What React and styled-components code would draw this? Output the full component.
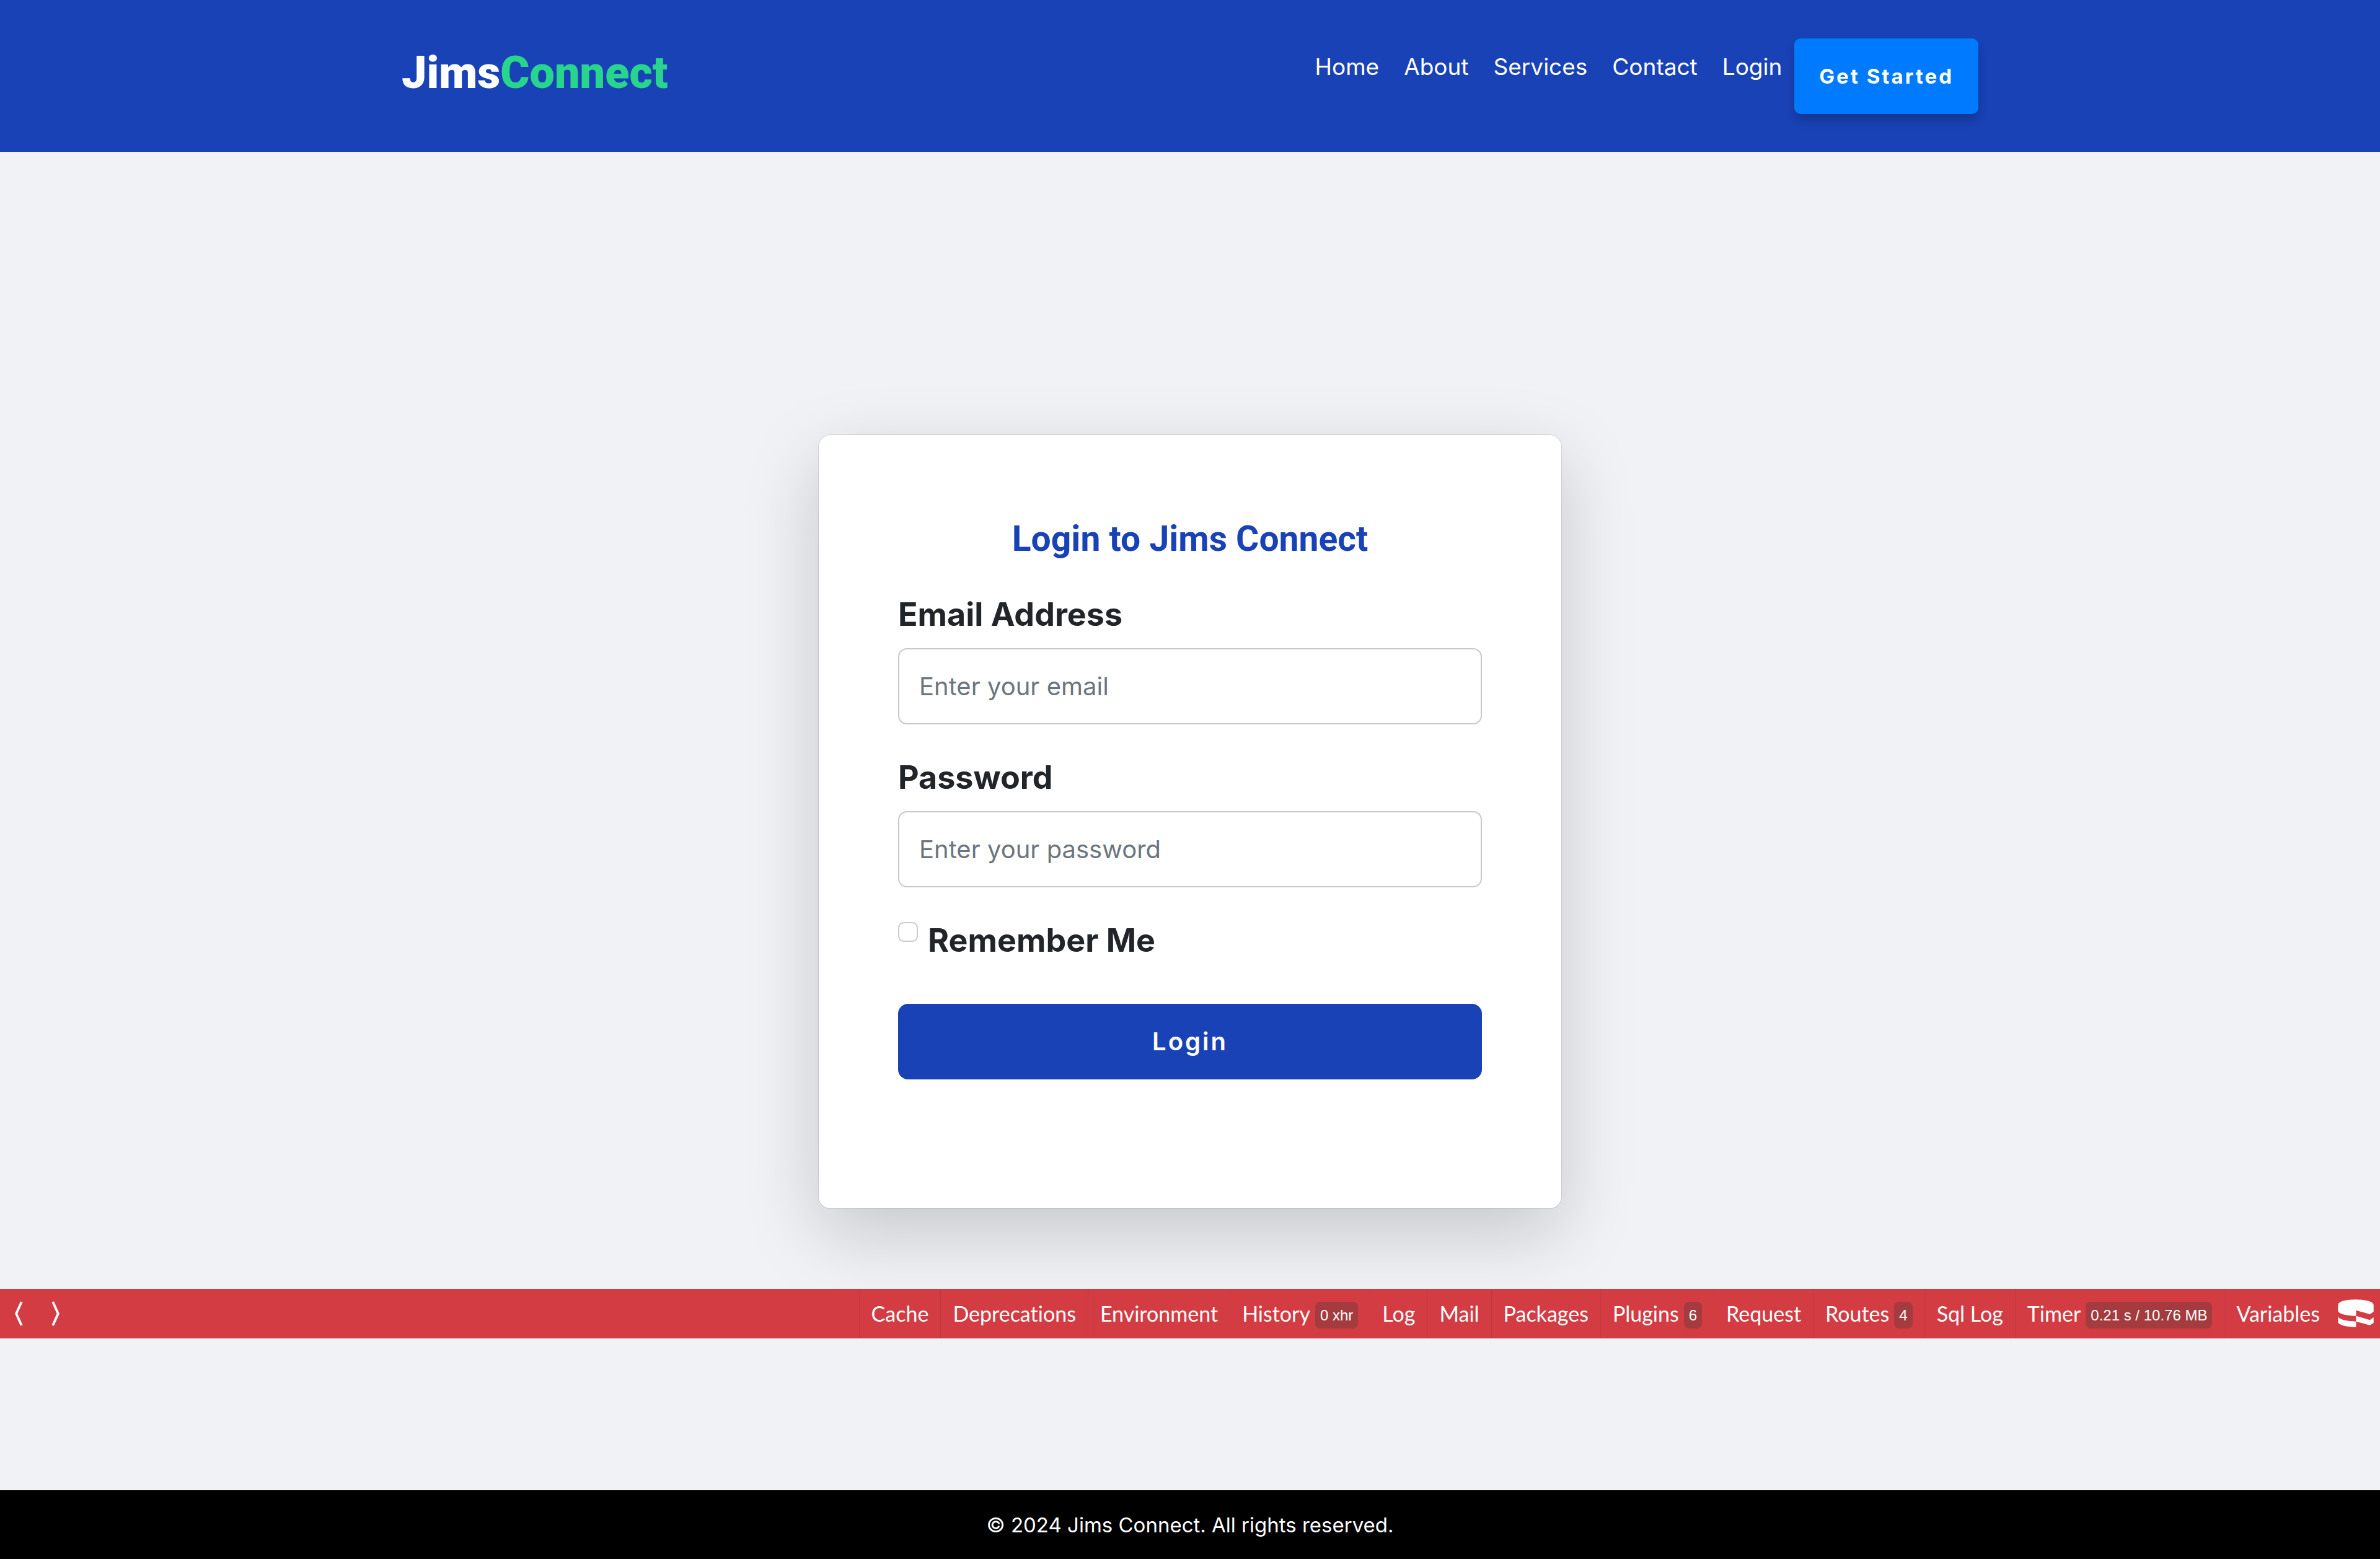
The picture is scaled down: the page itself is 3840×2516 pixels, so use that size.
import React from "react";
import styled, { createGlobalStyle } from "styled-components";

const sans = `Inter, "Liberation Sans", sans-serif`;
const display = `Roboto, "Liberation Sans", sans-serif`;
const brandBlue = "#1942b6";

const GlobalStyle = createGlobalStyle`
  *, *::before, *::after { box-sizing: border-box; }
  body { margin: 0; background: #f0f2f6; color: #212529; font-family: ${sans}; }
`;

const Page = styled.div`
  min-height: 100vh;
  display: flex;
  flex-direction: column;
`;

const Header = styled.header`
  background: ${brandBlue};
  padding: 62px 40px 61px;
`;

const HeaderInner = styled.div`
  max-width: 2544px;
  margin: 0 auto;
  display: flex;
  justify-content: space-between;
  align-items: flex-start;
`;

const Brand = styled.a`
  font: 900 72px/112px ${display};
  color: #fff;
  text-decoration: none;
`;

const BrandAccent = styled.span`
  color: #27d58c;
`;

const Nav = styled.nav`
  display: flex;
  align-items: flex-start;
`;

const NavLink = styled.a`
  padding: 16px 20px;
  font-size: 37px;
  line-height: 60px;
  color: #fff;
  text-decoration: none;
`;

const CallToAction = styled.button`
  height: 122px;
  padding: 0 40px;
  border: 0;
  border-radius: 10px;
  background: #007bff;
  box-shadow: 0 10px 15px rgba(0, 0, 0, 0.2);
  color: #fff;
  font: 700 33px/48px ${sans};
  letter-spacing: 3px;
`;

const Main = styled.main`
  flex: 1;
  display: flex;
  justify-content: center;
  align-items: flex-start;
  padding: 456px 40px 129px;
`;

const Card = styled.form`
  width: 100%;
  max-width: 1200px;
  padding: 128px 128px 208px;
  border: 1px solid rgba(0, 0, 0, 0.1);
  border-radius: 20px;
  background: #fff;
  background-clip: padding-box;
  box-shadow: 0 40px 120px rgba(0, 0, 0, 0.175);
`;

const Title = styled.h1`
  margin: 0 0 44px;
  font: 700 57px/80px ${display};
  color: ${brandBlue};
  text-align: center;
`;

const Field = styled.div`
  display: flex;
  flex-direction: column;
  gap: 16px;
  margin-bottom: 48px;
`;

const Label = styled.label`
  font-size: 52px;
  font-weight: 700;
  line-height: 76px;
`;

const TextInput = styled.input`
  width: 100%;
  height: 123px;
  padding: 0 32px;
  border: 2px solid #c6c8ca;
  border-radius: 14px;
  background: #fff;
  color: #212529;
  font: 400 40px/60px ${sans};
  &::placeholder { color: #6c757d; opacity: 1; }
`;

const CheckRow = styled.div`
  display: flex;
  align-items: flex-start;
  gap: 16px;
  margin-bottom: 64px;
`;

const Checkbox = styled.input`
  appearance: none;
  width: 32px;
  height: 32px;
  margin: 8px 0 0;
  border: 2px solid #c9cbcd;
  border-radius: 9px;
  background: #fff;
  &:checked { background: ${brandBlue}; }
`;

const SubmitButton = styled.button`
  display: block;
  width: 100%;
  height: 122px;
  border: 0;
  border-radius: 16px;
  background: ${brandBlue};
  color: #fff;
  font: 600 40px/60px ${sans};
  letter-spacing: 3px;
`;

const Toolbar = styled.div`
  display: flex;
  justify-content: space-between;
  height: 80px;
  background: #d33c43;
  color: #fff;
`;

const ToolbarGroup = styled.div`
  display: flex;
  align-items: stretch;
`;

const ArrowButton = styled.button`
  display: flex;
  align-items: center;
  justify-content: center;
  width: 60px;
  padding: 0;
  border: 0;
  background: none;
  color: inherit;
`;

const PanelButton = styled.button`
  display: flex;
  align-items: center;
  gap: 8px;
  padding: 0 19px;
  border: 0;
  border-left: 1px solid #bf393f;
  background: none;
  color: inherit;
  font: 400 34px/40px Lato, "Open Sans", sans-serif;
  font-variant-ligatures: none;
  white-space: nowrap;
`;

const Badge = styled.span`
  padding: 0 8px;
  margin-top: 4px;
  border-radius: 8px;
  background: #a33b3f;
  font: 400 24px/43px "Liberation Sans", sans-serif;
`;

const LogoButton = styled.button`
  display: flex;
  align-items: center;
  padding: 0 10px;
  border: 0;
  background: none;
`;

const Footer = styled.footer`
  margin-top: 245px;
  padding: 32px 40px 31px;
  background: #000;
  color: #fff;
  font-size: 33px;
  line-height: 48px;
  text-align: center;
`;

const links = ["Home", "About", "Services", "Contact", "Login"];

const panels = [
  { name: "Cache" },
  { name: "Deprecations" },
  { name: "Environment" },
  { name: "History", badge: "0 xhr" },
  { name: "Log" },
  { name: "Mail" },
  { name: "Packages" },
  { name: "Plugins", badge: "6" },
  { name: "Request" },
  { name: "Routes", badge: "4" },
  { name: "Sql Log" },
  { name: "Timer", badge: "0.21 s / 10.76 MB" },
  { name: "Variables" },
];

function Arrow({ points }) {
  return (
    <svg width="16" height="40" viewBox="0 0 16 42" fill="none" stroke="currentColor" strokeWidth="4" aria-hidden="true">
      <polyline points={points} />
    </svg>
  );
}

function CakeLogo() {
  return (
    <svg width="58" height="46" viewBox="0 0 174 138" fill="#fff" aria-hidden="true">
      <path d="M1 26C4 9 42 1 87 1s83 8 86 25v34l-18 12-67-19v27C45 80 8 72 1 58Z" />
      <path d="M1 85c10 14 42 21 87 22v27C43 134 8 126 1 112Z" />
      <path d="M88 80l67 20 18-13v27l-18 11-67-18Z" />
    </svg>
  );
}

export default function App() {
  return (
    <Page>
      <GlobalStyle />
      <Header>
        <HeaderInner>
          <Brand href="#">
            Jims<BrandAccent>Connect</BrandAccent>
          </Brand>
          <Nav>
            {links.map((link) => (
              <NavLink key={link} href="#">{link}</NavLink>
            ))}
            <CallToAction type="button">Get Started</CallToAction>
          </Nav>
        </HeaderInner>
      </Header>

      <Main>
        <Card onSubmit={(event) => event.preventDefault()}>
          <Title>Login to Jims Connect</Title>
          <Field>
            <Label htmlFor="email">Email Address</Label>
            <TextInput id="email" type="email" placeholder="Enter your email" />
          </Field>
          <Field>
            <Label htmlFor="password">Password</Label>
            <TextInput id="password" type="password" placeholder="Enter your password" />
          </Field>
          <CheckRow>
            <Checkbox id="remember" type="checkbox" />
            <Label htmlFor="remember">Remember Me</Label>
          </CheckRow>
          <SubmitButton type="submit">Login</SubmitButton>
        </Card>
      </Main>

      <Toolbar>
        <ToolbarGroup>
          <ArrowButton type="button" aria-label="Scroll left">
            <Arrow points="13,1 4,21 13,41" />
          </ArrowButton>
          <ArrowButton type="button" aria-label="Scroll right">
            <Arrow points="3,1 12,21 3,41" />
          </ArrowButton>
        </ToolbarGroup>
        <ToolbarGroup>
          {panels.map(({ name, badge }) => (
            <PanelButton key={name} type="button">
              {name}
              {badge && <Badge>{badge}</Badge>}
            </PanelButton>
          ))}
          <LogoButton type="button" aria-label="Toggle toolbar">
            <CakeLogo />
          </LogoButton>
        </ToolbarGroup>
      </Toolbar>

      <Footer>© 2024 Jims Connect. All rights reserved.</Footer>
    </Page>
  );
}
